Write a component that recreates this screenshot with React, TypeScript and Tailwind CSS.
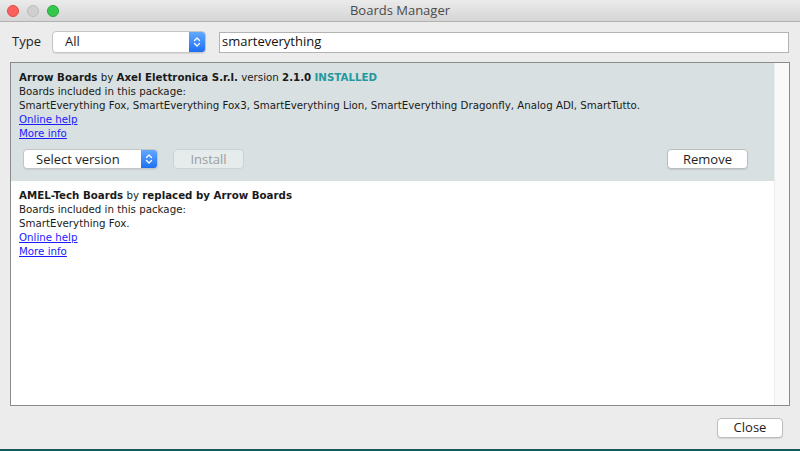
import React from "react";

const ui = { fontFamily: '"Open Sans", "Liberation Sans", sans-serif' };
const list = { fontFamily: '"DejaVu Sans", Verdana, sans-serif' };

const Chevrons = () => (
  <svg width="8" height="12" viewBox="0 0 8 12" fill="none" stroke="white" strokeWidth="1.3" strokeLinecap="round" strokeLinejoin="round">
    <path d="M1.5 4.5 L4 2 L6.5 4.5" />
    <path d="M1.5 7.5 L4 10 L6.5 7.5" />
  </svg>
);

const PopUp = ({ label, className }: { label: string; className: string }) => (
  <div
    className={`flex items-stretch bg-white border border-[#c4c4c4] rounded-[4px] shadow-[0_1px_1px_rgba(0,0,0,0.08)] overflow-hidden ${className}`}
  >
    <div className="flex-1 flex items-center pl-[12px] text-[13px] text-[#1e1e1e]">{label}</div>
    <div className="w-[16px] flex items-center justify-center bg-gradient-to-b from-[#62a8fd] to-[#1c6ff3]">
      <Chevrons />
    </div>
  </div>
);

const Button = ({ label, className, disabled }: { label: string; className: string; disabled?: boolean }) => (
  <div
    className={`h-[20px] flex items-center justify-center rounded-[4px] text-[13px] ${
      disabled
        ? "bg-[#e6ebeb] border border-[#cdd3d3] text-[#9b9e9e]"
        : "bg-white border border-[#bdbdbd] text-[#1e1e1e] shadow-[0_1px_1px_rgba(0,0,0,0.1)]"
    } ${className}`}
  >
    {label}
  </div>
);

const Link = ({ children }: { children: React.ReactNode }) => (
  <div className="text-[#1a1aff] underline underline-offset-[1px]">{children}</div>
);

export default function App() {
  return (
    <div className="w-[800px] h-[451px] flex flex-col bg-[#ececec] overflow-hidden" style={ui}>
      {/* title bar */}
      <div className="h-[22px] shrink-0 relative flex items-center justify-center bg-gradient-to-b from-[#ebebeb] to-[#d5d5d5] border-b border-[#b3b3b3]">
        <div className="absolute left-[7px] top-[5px] flex gap-[8px]">
          <div className="w-[12px] h-[12px] rounded-full bg-[#fc605c] border border-[#de4a45]" />
          <div className="w-[12px] h-[12px] rounded-full bg-[#cfcfcf] border border-[#bdbdbd]" />
          <div className="w-[12px] h-[12px] rounded-full bg-[#34c84a] border border-[#24a73a]" />
        </div>
        <span className="text-[13px] text-[#4a4a4a]">Boards Manager</span>
      </div>

      {/* filter row */}
      <div className="flex items-center mt-[9px] h-[22px] pl-[12px] pr-[11px]">
        <span className="text-[13px] text-[#1e1e1e] w-[40px]">Type</span>
        <PopUp label="All" className="w-[154px] h-[22px]" />
        <div className="ml-[13px] flex-1 h-[21px] bg-white border border-[#b3b3b3] flex items-center pl-[2px] text-[13px] text-[#111]">
          smarteverything
        </div>
      </div>

      {/* list */}
      <div className="mt-[9px] mx-[10px] h-[344px] border border-[#8a8a8a] bg-white flex" style={list}>
        <div className="flex-1 flex flex-col text-[10.25px] leading-[14px] text-[#1a1a1a]">
          <div className="bg-[#d8e0e1] pl-[8px] pt-[7px] pb-[12px]">
            <div>
              <b>Arrow Boards</b> by <b>Axel Elettronica S.r.l.</b> version <b>2.1.0</b>{" "}
              <b className="text-[#23999f]">INSTALLED</b>
            </div>
            <div>Boards included in this package:</div>
            <div>SmartEverything Fox, SmartEverything Fox3, SmartEverything Lion, SmartEverything Dragonfly, Analog ADI, SmartTutto.</div>
            <Link>Online help</Link>
            <Link>More info</Link>
            <div className="flex items-center mt-[9px] pr-[26px]" style={ui}>
              <PopUp label="Select version" className="w-[135px] h-[20px] ml-[4px]" />
              <Button label="Install" disabled className="w-[71px] ml-[15px]" />
              <div className="flex-1" />
              <Button label="Remove" className="w-[81px]" />
            </div>
          </div>
          <div className="pl-[8px] pt-[7px]">
            <div>
              <b>AMEL-Tech Boards</b> by <b>replaced by Arrow Boards</b>
            </div>
            <div>Boards included in this package:</div>
            <div>SmartEverything Fox.</div>
            <Link>Online help</Link>
            <Link>More info</Link>
          </div>
        </div>
        <div className="w-[15px] bg-[#f9f9f9] border-l border-[#ececec]" />
      </div>

      {/* footer */}
      <div className="flex justify-end mt-[12px] pr-[17px]">
        <Button label="Close" className="w-[66px]" />
      </div>
      <div className="flex-1" />
      <div className="h-[2px] bg-[#17585a]" />
    </div>
  );
}
